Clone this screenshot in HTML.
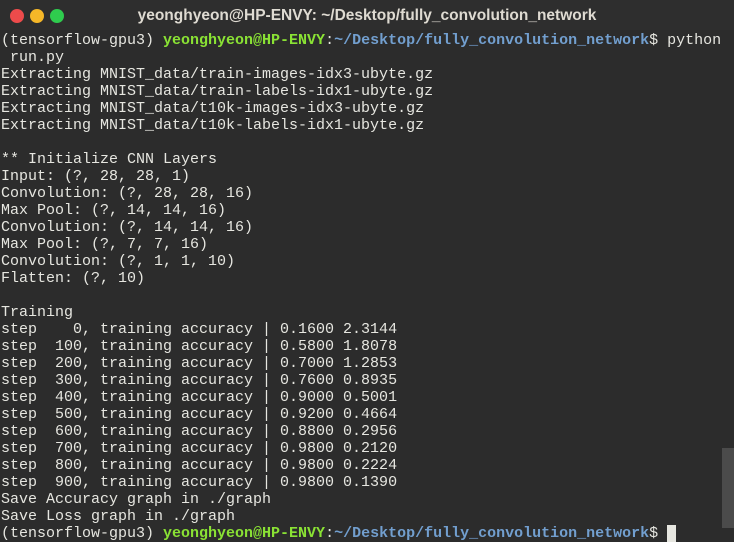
<!DOCTYPE html>
<html><head><style>
body{margin:0;width:734px;height:542px;background:#2c2c2c;overflow:hidden;position:relative;font-family:"Liberation Mono",monospace}
.tb{position:absolute;left:0;top:0;width:734px;height:30px;background:#2e2e2e;color:#dfdbd2;font:bold 15.5px "Liberation Sans",sans-serif;text-align:center;line-height:31px}
.d{position:absolute;top:9px;width:14px;height:14px;border-radius:50%}
pre{position:absolute;left:1px;top:32px;margin:0;font:15px/17px "Liberation Mono",monospace;color:#e6e6e0;white-space:pre}
.g{color:#8ae234;font-weight:bold}.b{color:#729fcf;font-weight:bold}
.cur{display:inline-block;width:9px;height:17px;background:#e6e6e0;vertical-align:top}
.sb{position:absolute;left:722px;top:448px;width:12px;height:80px;background:#4b4b4b}
</style></head><body>
<div class="tb">yeonghyeon@HP-ENVY: ~/Desktop/fully_convolution_network</div>
<div class="d" style="left:10px;background:#ed4b4b"></div>
<div class="d" style="left:30px;background:#f5b728"></div>
<div class="d" style="left:50px;background:#2fcc4e"></div>
<pre>(tensorflow-gpu3) <span class="g">yeonghyeon@HP-ENVY</span>:<span class="b">~/Desktop/fully_convolution_network</span>$ python
 run.py
Extracting MNIST_data/train-images-idx3-ubyte.gz
Extracting MNIST_data/train-labels-idx1-ubyte.gz
Extracting MNIST_data/t10k-images-idx3-ubyte.gz
Extracting MNIST_data/t10k-labels-idx1-ubyte.gz

** Initialize CNN Layers
Input: (?, 28, 28, 1)
Convolution: (?, 28, 28, 16)
Max Pool: (?, 14, 14, 16)
Convolution: (?, 14, 14, 16)
Max Pool: (?, 7, 7, 16)
Convolution: (?, 1, 1, 10)
Flatten: (?, 10)

Training
step    0, training accuracy | 0.1600 2.3144
step  100, training accuracy | 0.5800 1.8078
step  200, training accuracy | 0.7000 1.2853
step  300, training accuracy | 0.7600 0.8935
step  400, training accuracy | 0.9000 0.5001
step  500, training accuracy | 0.9200 0.4664
step  600, training accuracy | 0.8800 0.2956
step  700, training accuracy | 0.9800 0.2120
step  800, training accuracy | 0.9800 0.2224
step  900, training accuracy | 0.9800 0.1390
Save Accuracy graph in ./graph
Save Loss graph in ./graph
(tensorflow-gpu3) <span class="g">yeonghyeon@HP-ENVY</span>:<span class="b">~/Desktop/fully_convolution_network</span>$ <span class="cur"></span></pre>
<div class="sb"></div>
</body></html>
